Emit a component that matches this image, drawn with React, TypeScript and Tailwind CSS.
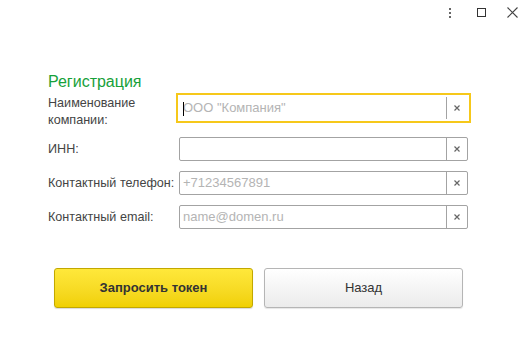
import type { ReactNode } from 'react'

function Field({ placeholder, focused }: { placeholder?: string; focused?: boolean }) {
  return (
    <div
      className={
        'flex h-[24px] w-[289px] items-stretch border bg-white ' +
        (focused
          ? 'border-white outline-2 outline-offset-[1px] outline-[#f6c81a]'
          : 'rounded-[2px] border-[#a3a3a3]')
      }
    >
      <div className="relative flex flex-1 items-center pl-[3px] text-[13px] text-[#b4b4b4]">
        {focused && <span className="absolute left-[3px] top-[5px] h-[14px] w-px bg-black" />}
        {placeholder}
      </div>
      <div className="w-px bg-[#a3a3a3]" />
      <div className="flex w-[20px] items-center justify-center">
        <svg width="6" height="6" viewBox="0 0 6 6">
          <path d="M0.5 0.5L5.5 5.5M5.5 0.5L0.5 5.5" stroke="#666" strokeWidth="1.2" />
        </svg>
      </div>
    </div>
  )
}

function Row({ label, children, className }: { label: ReactNode; children: ReactNode; className?: string }) {
  return (
    <div className={'flex items-center ' + (className ?? '')}>
      <div className="w-[131px] text-[12.6px] leading-[17px] text-[#444]">{label}</div>
      {children}
    </div>
  )
}

export default function App() {
  return (
    <div className="h-[348px] w-[525px] bg-white font-['Liberation_Sans',Arial,sans-serif]">
      {/* window controls */}
      <div className="flex h-[25px] items-center justify-end pr-[7px]">
        <div className="flex flex-col gap-[2px]">
          <span className="block h-[2px] w-[2px] bg-[#666]" />
          <span className="block h-[2px] w-[2px] bg-[#666]" />
          <span className="block h-[2px] w-[2px] bg-[#666]" />
        </div>
        <div className="ml-[26px] h-[9px] w-[9px] border border-[#333]" />
        <svg className="ml-[21px]" width="11" height="11" viewBox="0 0 11 11">
          <path d="M0.5 0.5L10.5 10.5M10.5 0.5L0.5 10.5" stroke="#444" strokeWidth="1.1" />
        </svg>
      </div>

      <div className="pl-[48px] pt-[48px]">
        <div className="text-[16px] leading-[18px] text-[#17a13a]">Регистрация</div>

        <div className="mt-[4px] flex items-start">
          <div className="w-[131px] text-[12.6px] leading-[17px] text-[#444]">
            Наименование
            <br />
            компании:
          </div>
          <div className="mt-[1px]">
            <Field placeholder={'ООО "Компания"'} focused />
          </div>
        </div>

        <Row label="ИНН:" className="mt-[8px]">
          <Field />
        </Row>
        <Row label="Контактный телефон:" className="mt-[10px]">
          <Field placeholder="+71234567891" />
        </Row>
        <Row label="Контактный email:" className="mt-[10px]">
          <Field placeholder="name@domen.ru" />
        </Row>

        <div className="ml-[6px] mt-[39px] flex gap-[11px]">
          <button className="h-[40px] w-[199px] rounded-[3px] border border-[#c2a800] bg-gradient-to-b from-[#ffe83a] to-[#f0d000] text-[13px] font-bold text-[#333] shadow-[0_1px_1px_rgba(0,0,0,0.15)]">
            Запросить токен
          </button>
          <button className="h-[40px] w-[199px] rounded-[3px] border border-[#b5b5b5] bg-gradient-to-b from-white to-[#ebebeb] text-[13px] text-[#333] shadow-[0_1px_1px_rgba(0,0,0,0.1)]">
            Назад
          </button>
        </div>
      </div>
    </div>
  )
}
